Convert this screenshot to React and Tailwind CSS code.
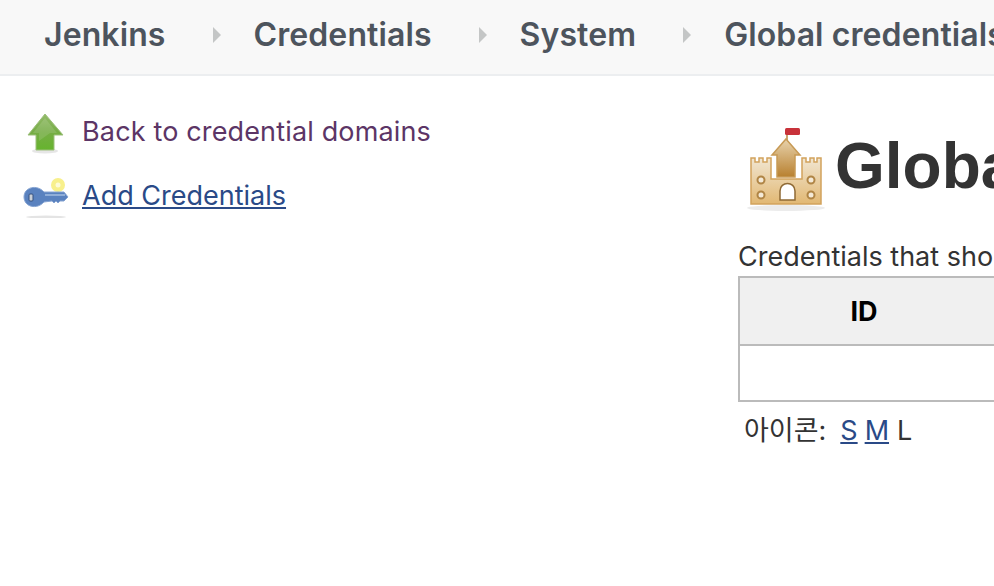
// App.jsx
const crumbs = ['Jenkins', 'Credentials', 'System', 'Global credentials (unrestricted)']

function ArrowUpIcon() {
  return (
    <svg width="44" height="44" viewBox="0 0 44 44" className="shrink-0 blur-[0.4px]">
      <defs>
        <linearGradient id="arrowFill" x1="0" y1="0" x2="0" y2="1">
          <stop offset="0" stopColor="#93bb6a" />
          <stop offset="0.5" stopColor="#76ad45" />
          <stop offset="1" stopColor="#66b42e" />
        </linearGradient>
      </defs>
      <ellipse cx="21" cy="41" rx="13" ry="2.5" fill="#e6e6e6" />
      <path d="M21 4 L39 25 L30 25 L30 40 L12 40 L12 25 L4 25 Z" fill="url(#arrowFill)" stroke="#9dbf7c" strokeWidth="1" strokeLinejoin="round" />
      <path d="M21 8 L33 23 L26 23 L15 31 L15 23 L9 23 Z" fill="#ffffff" opacity="0.12" />
    </svg>
  )
}

function KeyIcon() {
  return (
    <svg width="50" height="44" viewBox="0 0 50 44" className="shrink-0 blur-[0.4px]">
      <ellipse cx="23" cy="43" rx="20" ry="1.5" fill="#e4e4e4" />
      <circle cx="35" cy="11" r="7" fill="#f8f08c" />
      <circle cx="35" cy="11" r="2.5" fill="#fdfbd8" />
      <path d="M1 23 C1 13 14 10 21 18 L41 18 L45 23 L41 27 L37 27 L35 29 L33 27 L31 29 L29 27 L21 28 C14 36 1 33 1 23 Z" fill="#5a82bf" stroke="#86a4d2" strokeWidth="1" />
      <rect x="6" y="20" width="4" height="7" rx="1" fill="#c8ced6" stroke="#34507f" strokeWidth="1" />
      <path d="M22 21 L42 21" stroke="#a3bce0" strokeWidth="1.5" />
    </svg>
  )
}

function CastleIcon() {
  return (
    <svg width="84" height="90" viewBox="0 -4 84 90" className="shrink-0 blur-[0.4px]">
      <defs>
        <linearGradient id="wallFill" x1="0" y1="0" x2="0" y2="1">
          <stop offset="0" stopColor="#f1e6d2" />
          <stop offset="1" stopColor="#e2b873" />
        </linearGradient>
        <linearGradient id="keepFill" x1="0" y1="0" x2="0" y2="1">
          <stop offset="0" stopColor="#e8d3ad" />
          <stop offset="1" stopColor="#b8802f" />
        </linearGradient>
      </defs>
      <ellipse cx="40" cy="83" rx="39" ry="3" fill="#ececec" />
      <rect x="39" y="3" width="15" height="7" rx="1.5" fill="#c8323a" />
      <path d="M41 10 L41 15" stroke="#b8863f" strokeWidth="1.5" />
      <path d="M40 14 L54 30 L49 30 L49 52 L31 52 L31 30 L26 30 Z" fill="url(#keepFill)" stroke="#c79a55" strokeWidth="1.5" />
      <path d="M5 33 L9 33 L9 37 L13 37 L13 33 L17 33 L17 37 L21 37 L21 33 L25 33 L25 54 L56 54 L56 33 L60 33 L60 37 L64 37 L64 33 L68 33 L68 37 L71 37 L71 33 L75 33 L75 79 L5 79 Z" fill="url(#wallFill)" stroke="#d2a35c" strokeWidth="1.5" />
      <path d="M34 75 L34 66 C34 56 49 56 49 66 L49 75 Z" fill="#ffffff" stroke="#8f6a35" strokeWidth="1.5" />
      <circle cx="15" cy="55" r="3.5" fill="#f4ead8" stroke="#b08545" strokeWidth="2" />
      <circle cx="65" cy="55" r="3.5" fill="#f4ead8" stroke="#b08545" strokeWidth="2" />
      <circle cx="15" cy="70" r="3.5" fill="#f4ead8" stroke="#b08545" strokeWidth="2" />
      <circle cx="65" cy="70" r="3.5" fill="#f4ead8" stroke="#b08545" strokeWidth="2" />
    </svg>
  )
}

export default function App() {
  return (
    <div className="w-[994px] h-[586px] overflow-hidden bg-white font-['Inter',sans-serif] text-[#333]">
      {/* Breadcrumb bar */}
      <div className="h-[76px] flex items-center pl-[44px] pb-[4px] bg-[#f8f8f8] border-b-2 border-[#eceef0] whitespace-nowrap">
        {crumbs.map((crumb, i) => (
          <div key={crumb} className="flex items-center shrink-0">
            <span className="text-[32px] font-semibold tracking-[0.1px] text-[#4d545d]">{crumb}</span>
            {i < crumbs.length - 1 && (
              <svg width="10" height="16" viewBox="0 0 10 16" className="ml-[46px] mr-[32px] shrink-0">
                <path d="M1 0 L9 8 L1 16 Z" fill="#c4c6c6" />
              </svg>
            )}
          </div>
        ))}
      </div>

      <div className="flex">
        {/* Side panel */}
        <div className="w-[738px] shrink-0 pt-[34px] pl-[24px]">
          <div className="flex items-center h-[44px] gap-[14px]">
            <ArrowUpIcon />
            <a className="text-[27px] tracking-[0.15px] text-[#5c3566]">Back to credential domains</a>
          </div>
          <div className="flex items-center h-[44px] mt-[20px] gap-[9px] -ml-[1px]">
            <KeyIcon />
            <a className="text-[27px] text-[#2a4a87] underline">Add Credentials</a>
          </div>
        </div>

        {/* Main panel */}
        <div className="flex-1 min-w-0 overflow-hidden">
          <div className="flex items-center h-[90px] mt-[45px] ml-[8px] gap-[5px] whitespace-nowrap">
            <CastleIcon />
            <h1 className="font-['Liberation_Sans',sans-serif] text-[64px] font-bold text-[#333]">Global credentials</h1>
          </div>
          <p className="mt-[30px] h-[32px] leading-[32px] text-[27px] whitespace-nowrap">Credentials that should be available</p>
          <div className="w-[400px] mt-[3px] border-2 border-[#bbb]">
            <div className="h-[68px] pt-[3px] flex items-center bg-[#f0f0f0] border-b-2 border-[#bbb]">
              <span className="w-[248px] text-center text-[27px] font-bold text-black">ID</span>
            </div>
            <div className="h-[54px]" />
          </div>
          <div className="flex items-center mt-[12px] ml-[6px] text-[27px] leading-[34px] whitespace-nowrap">
            <span className="font-['Inter','Noto_Sans_CJK_KR',sans-serif] mr-[14px]">아이콘:</span>
            <a className="text-[#2a4a87] underline mr-[7px]">S</a>
            <a className="text-[#2a4a87] underline mr-[8px]">M</a>
            <span>L</span>
          </div>
        </div>
      </div>
    </div>
  )
}
